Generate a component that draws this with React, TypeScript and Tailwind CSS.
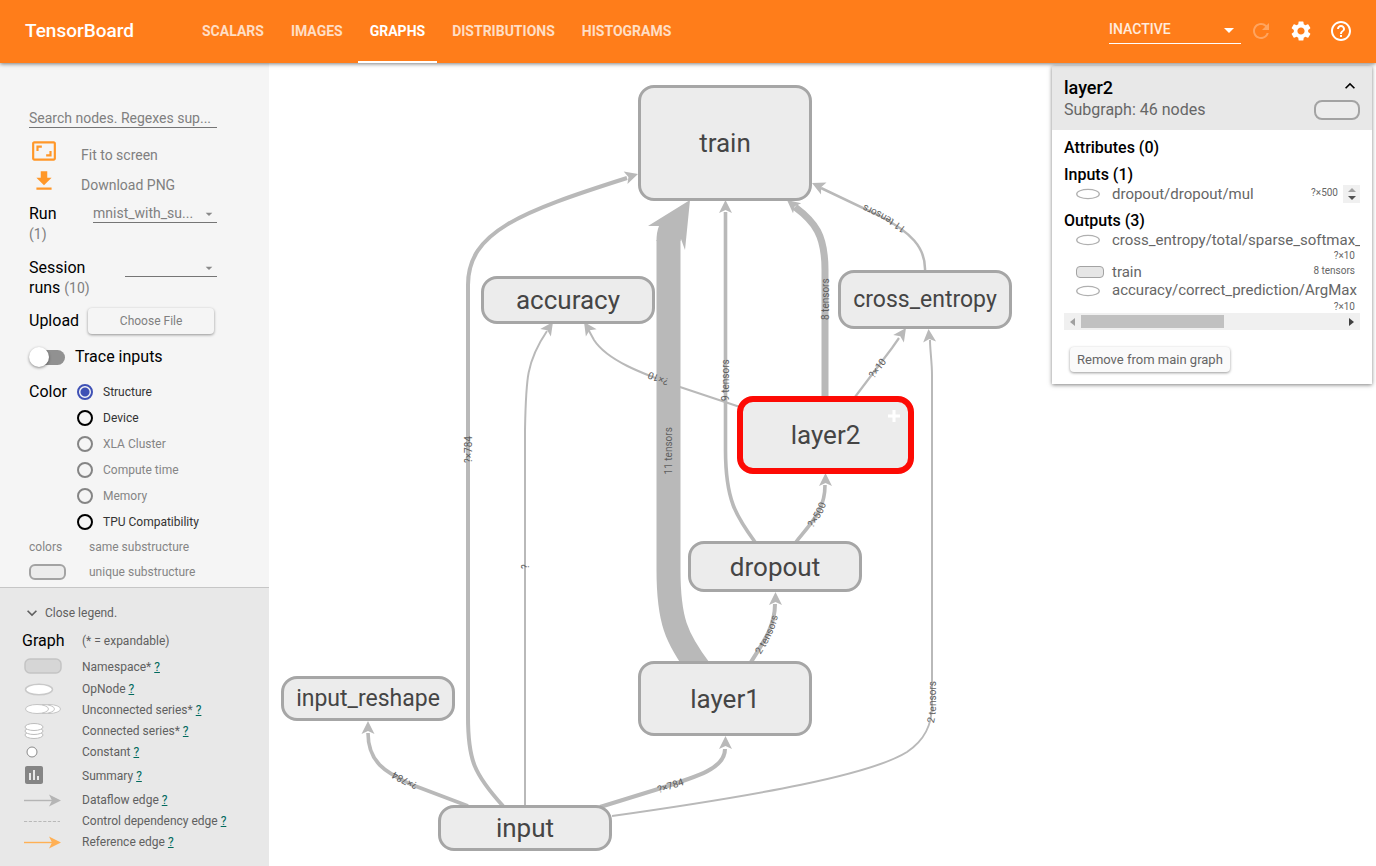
import React from "react";
import {
  MdArrowDropDown,
  MdAspectRatio,
  MdExpandLess,
  MdExpandMore,
  MdFileDownload,
  MdHelpOutline,
  MdInsertChart,
  MdRefresh,
  MdSettings,
} from "react-icons/md";

const tabs = ["SCALARS", "IMAGES", "GRAPHS", "DISTRIBUTIONS", "HISTOGRAMS"];

function Header() {
  return (
    <header className="relative z-20 flex h-[63px] shrink-0 items-center bg-[#ff7d1a] pr-[23px] pl-[25px] text-white shadow-[0_1px_4px_rgba(0,0,0,0.5)]">
      <h1 className="w-[165px] text-[19px] font-medium">TensorBoard</h1>
      <nav className="flex h-full gap-[3px]">
        {tabs.map((t) => (
          <a
            key={t}
            href={"#" + t.toLowerCase()}
            className={
              t === "GRAPHS"
                ? "flex items-center border-b-2 border-white px-3 text-sm font-bold"
                : "flex items-center border-b-2 border-transparent px-3 text-sm font-bold text-white/75"
            }
          >
            {t}
          </a>
        ))}
      </nav>
      <div className="ml-auto flex items-center pb-0.5">
        <div className="relative mr-2 w-[132px] pb-0.5">
          <select
            aria-label="Reload mode"
            className="block h-7 w-full appearance-none border-b border-white bg-transparent text-sm font-medium text-white/85 outline-none"
          >
            <option>INACTIVE</option>
          </select>
          <MdArrowDropDown className="pointer-events-none absolute top-0.5 right-0 size-6" />
        </div>
        <button aria-label="Reload" className="text-white/30">
          <MdRefresh className="size-6" />
        </button>
        <button aria-label="Settings" className="ml-4">
          <MdSettings className="size-6" />
        </button>
        <button aria-label="Help" className="ml-4">
          <MdHelpOutline className="size-6" />
        </button>
      </div>
    </header>
  );
}

const colorModes = [
  { name: "Structure", enabled: true },
  { name: "Device", enabled: true },
  { name: "XLA Cluster", enabled: false },
  { name: "Compute time", enabled: false },
  { name: "Memory", enabled: false },
  { name: "TPU Compatibility", enabled: true },
];

function Controls() {
  return (
    <section className="border-b border-[#c6c6c6] bg-[#f5f5f5] pt-[45px] pr-[52px] pb-0.5 pl-[29px] text-black">
      <input
        aria-label="Search nodes"
        placeholder="Search nodes. Regexes sup..."
        className="block h-5 w-full border-b border-[#757575] bg-transparent text-sm outline-none placeholder:text-[#808080]"
      />
      <button className="mt-2 flex h-[30px] w-full items-center text-sm text-[#808080]">
        <MdAspectRatio className="ml-[2px] size-[26px] text-[#ff9728]" />
        <span className="ml-6 pt-2">Fit to screen</span>
      </button>
      <button className="flex h-[30px] w-full items-center text-sm text-[#808080]">
        <MdFileDownload className="ml-[2px] size-[26px] text-[#ff9728]" />
        <span className="ml-6 pt-2">Download PNG</span>
      </button>

      <div className="mt-2 flex items-start justify-between text-base leading-5">
        <label htmlFor="run">
          Run
          <br />
          <span className="text-sm text-[#808080]">(1)</span>
        </label>
        <div className="relative w-[124px]">
          <select
            id="run"
            className="block h-[19px] w-full appearance-none border-b border-[#757575] bg-transparent text-sm leading-4 text-[#808080] outline-none"
          >
            <option>mnist_with_su...</option>
          </select>
          <MdArrowDropDown className="pointer-events-none absolute top-0.5 right-0 size-4 text-[#8a8a8a]" />
        </div>
      </div>

      <div className="mt-3.5 flex items-start justify-between text-base leading-5">
        <label htmlFor="session">
          Session
          <br />
          runs <span className="text-sm text-[#808080]">(10)</span>
        </label>
        <div className="relative w-[92px]">
          <select
            id="session"
            className="block h-[19px] w-full appearance-none border-b border-[#757575] bg-transparent text-sm outline-none"
          >
            <option></option>
          </select>
          <MdArrowDropDown className="pointer-events-none absolute top-0.5 right-0 size-4 text-[#8a8a8a]" />
        </div>
      </div>

      <div className="mt-[10px] flex items-center text-base">
        <span>Upload</span>
        <button className="ml-[9px] h-[26px] w-[126px] rounded-sm bg-[#f5f5f5] text-xs text-[#808080] shadow-[0_1px_3px_rgba(0,0,0,0.4)]">
          Choose File
        </button>
      </div>

      <label className="mt-[11px] flex h-6 items-center text-base">
        <span className="relative flex h-5 w-9 items-center">
          <input type="checkbox" className="peer absolute inset-0 z-10 m-0 opacity-0" />
          <span className="ml-1 h-[15px] w-8 rounded-full bg-[#919191]" />
          <span className="absolute left-0 size-5 rounded-full bg-white shadow-[0_1px_3px_rgba(0,0,0,0.45)]" />
        </span>
        <span className="ml-2.5">Trace inputs</span>
      </label>

      <fieldset className="mt-[10px] flex items-start">
        <legend className="float-left w-12 text-base leading-[26px]">Color</legend>
        <div className="flex flex-col">
          {colorModes.map((m) => (
            <label
              key={m.name}
              className={
                m.enabled
                  ? "flex h-[26px] items-center gap-2.5 text-xs text-[#333]"
                  : "flex h-[26px] items-center gap-2.5 text-xs text-[#858585]"
              }
            >
              <input
                type="radio"
                name="color"
                disabled={!m.enabled}
                defaultChecked={m.name === "Structure"}
                className="m-0 size-4 appearance-none rounded-full border-2 border-black checked:border-[#3f51b5] checked:bg-[radial-gradient(circle,#3f51b5_4px,transparent_5px)] disabled:border-[#858585]"
              />
              {m.name}
            </label>
          ))}
        </div>
      </fieldset>

      <div className="flex h-6 items-center text-xs text-[#858585]">
        <span className="w-[60px]">colors</span>
        <span>same substructure</span>
      </div>
      <div className="flex h-[26px] items-center text-xs text-[#858585]">
        <span className="mr-[23px] h-4 w-[37px] rounded-md border-2 border-[#a3a3a3] bg-[#ececec]" />
        <span>unique substructure</span>
      </div>
    </section>
  );
}

const legend = [
  {
    name: "Namespace*",
    row: "flex h-[22px] items-center",
    icon: <rect x="1" y="1" width="36" height="14" rx="5" fill="#d6d6d6" stroke="#c4c4c4" strokeWidth="1.5" />,
  },
  {
    name: "OpNode",
    row: "flex h-[21px] items-center",
    icon: <ellipse cx="15" cy="9.5" rx="13.5" ry="5.2" fill="#fff" stroke="#c9c9c9" strokeWidth="1.5" />,
  },
  {
    name: "Unconnected series*",
    row: "flex h-[21px] items-center",
    icon: (
      <g fill="#fff" stroke="#c4c4c4" strokeWidth="1">
        <ellipse cx="25" cy="8" rx="11.5" ry="4.5" />
        <ellipse cx="19" cy="8" rx="11.5" ry="4.5" />
        <ellipse cx="13" cy="8" rx="11.5" ry="4.5" />
      </g>
    ),
  },
  {
    name: "Connected series*",
    row: "flex h-[21px] items-center",
    icon: (
      <g fill="#fff" stroke="#bdbdbd" strokeWidth="1">
        <ellipse cx="10" cy="13" rx="9" ry="3.5" />
        <ellipse cx="10" cy="9" rx="9" ry="3.5" />
        <ellipse cx="10" cy="5" rx="9" ry="3.5" />
      </g>
    ),
  },
  {
    name: "Constant",
    row: "flex h-[21px] items-center",
    icon: <circle cx="8" cy="9" r="5" fill="#fff" stroke="#8a8a8a" />,
  },
  {
    name: "Summary",
    row: "flex h-[27px] items-center",
    icon: <MdInsertChart x="-2" y="-4" size={24} color="#858585" />,
  },
  {
    name: "Dataflow edge",
    row: "flex h-[21px] items-center",
    icon: (
      <g>
        <path d="M0 9.5H28" stroke="#b5b5b5" strokeWidth="1.4" />
        <path d="M37 9.5L25 3.5L28 9.5L25 15.5Z" fill="#b5b5b5" />
      </g>
    ),
  },
  {
    name: "Control dependency edge",
    row: "flex h-[21px] items-center",
    icon: <path d="M0 9.5H36" stroke="#b9b9b9" strokeWidth="1.2" strokeDasharray="3.2 1.6" />,
  },
  {
    name: "Reference edge",
    row: "flex h-[21px] items-center",
    icon: (
      <g>
        <path d="M0 9.5H28" stroke="#ffb055" strokeWidth="1.4" />
        <path d="M37 9.5L25 3.5L28 9.5L25 15.5Z" fill="#ffb055" />
      </g>
    ),
  },
];

function Legend() {
  return (
    <section className="flex-1 bg-[#e8e8e8] pt-[15px] pb-3 pl-6 text-xs text-[#606060]">
      <button className="-ml-0.5 flex h-5 items-center">
        <MdExpandMore className="size-5" />
        <span className="ml-[3px]">Close legend.</span>
      </button>
      <div className="mt-1 -ml-0.5 flex h-7 items-center">
        <h2 className="w-[60px] text-base text-black">Graph</h2>
        <span>(* = expandable)</span>
      </div>
      <ul className="mt-px">
        {legend.map((l) => (
          <li key={l.name} className={l.row}>
            <svg width="38" height="18" className="overflow-visible">
              {l.icon}
            </svg>
            <span className="ml-5">
              {l.name}{" "}
              <a href="#help" className="text-[#00695c] underline">
                ?
              </a>
            </span>
          </li>
        ))}
      </ul>
    </section>
  );
}

type Edge = {
  id: string;
  d: string;
  width: number;
  tip?: [number, number, number];
  label?: string;
  at?: number;
};

const edges: Edge[] = [
  { id: "layer2-accuracy", d: "M740 407L680 387C640 373 607 360 594 340L588 329", width: 2, tip: [584, 322, 236], label: "?×10", at: 76 },
  { id: "layer1-train", d: "M700 670C676 638 668.5 620 668.5 570V240", width: 24, label: "11 tensors", at: 203 },
  { id: "input-train", d: "M503 806C474 774 468 760 468 717V285C468 232 520 212 627 178", width: 4, tip: [638, 174, -17], label: "?×784", at: 353 },
  { id: "input-accuracy", d: "M525 806V430C526 380 526 362 547 331", width: 2, tip: [553, 322, -55], label: "?", at: 237 },
  { id: "dropout-train", d: "M755 542C736 516 725.5 500 725.5 450V212", width: 3.6, tip: [725.5, 200, -90], label: "9 tensors", at: 148 },
  { id: "layer2-train", d: "M825 398V270C825 235 815 222 795 207", width: 7, tip: [787, 200, 219], label: "8 tensors", at: 78 },
  { id: "cross-train", d: "M925 271C926 247 910 232 880 216L821 188", width: 2.5, tip: [812, 183, 205], label: "11 tensors", at: 47 },
  { id: "layer2-cross", d: "M855 397L892 348L899 338", width: 2.2, tip: [906, 328, -55], label: "?×10", at: 26 },
  { id: "input-cross", d: "M612 816C760 795 870 775 907 752C925 740 932 725 932 705V375C932 362 930 350 930 340", width: 2, tip: [928.5, 329, -95], label: "2 tensors", at: 341 },
  { id: "dropout-layer2", d: "M796 542C812 522 825 510 825 485", width: 3.6, tip: [825.5, 473, -90], label: "?×500", at: 21 },
  { id: "layer1-dropout", d: "M751 662C765 640 775 625 775 604", width: 4, tip: [775.5, 592, -90], label: "2 tensors", at: 11 },
  { id: "input-layer1", d: "M600 807L655 790C700 776 725 768 725 749", width: 4, tip: [725.5, 736, -90], label: "?×784", at: 60 },
  { id: "input-reshape", d: "M468 806L410 784C385 772 368 762 368 733", width: 3.6, tip: [368, 721, -90], label: "?×784", at: 55 },
];

const nodes = [
  { name: "train", box: "left-[369px] top-[22px] h-[116px] w-[174px] text-[26px]" },
  { name: "accuracy", box: "left-[212px] top-[213px] h-[48px] w-[174px] text-[26px]" },
  { name: "cross_entropy", box: "left-[569px] top-[207px] h-[59px] w-[174px] text-[23px]" },
  { name: "dropout", box: "left-[419px] top-[478px] h-[51px] w-[174px] text-[26px]" },
  { name: "layer1", box: "left-[369px] top-[598px] h-[75px] w-[174px] text-[26px]" },
  { name: "input_reshape", box: "left-[12px] top-[613px] h-[45px] w-[174px] text-[23px]" },
  { name: "input", box: "left-[169px] top-[742px] h-[46px] w-[174px] text-[26px]" },
];

function Graph() {
  return (
    <div className="absolute inset-0 overflow-hidden">
      <svg width="1107" height="803" viewBox="269 63 1107 803" className="absolute top-0 left-0">
        {edges.map((e) => (
          <g key={e.id}>
            <path id={e.id} d={e.d} fill="none" stroke="#b9b9b9" strokeWidth={e.width} />
            {e.tip && (
              <path
                d="M0 0L-13 6.5L-10 0L-13 -6.5Z"
                fill="#b9b9b9"
                transform={`translate(${e.tip[0]} ${e.tip[1]}) rotate(${e.tip[2]})`}
              />
            )}
          </g>
        ))}
        <path d="M690 200L648 226L659 226Q656.5 232 656.5 241L680.5 241L681 239L685 250Z" fill="#b9b9b9" />
        {edges.map((e) => (
          <text key={e.id} fontSize="10" fill="#5e5e5e" dominantBaseline="central">
            <textPath href={"#" + e.id} startOffset={e.at}>
              {e.label}
            </textPath>
          </text>
        ))}
      </svg>
      {nodes.map((n) => (
        <button
          key={n.name}
          className={
            "absolute flex items-center justify-center rounded-2xl border-3 border-[#a6a6a6] bg-[#ececec] leading-none text-[#454545] " +
            n.box
          }
        >
          {n.name}
        </button>
      ))}
      <button className="absolute top-[333px] left-[468px] flex h-[78px] w-[177px] items-center justify-center rounded-2xl border-6 border-[#fd0a04] bg-[#ececec] text-[26px] leading-none text-[#454545]">
        layer2
        <svg viewBox="0 0 14 14" className="absolute top-[7px] right-[7px] size-3.5">
          <path d="M7 1V13M1 7H13" stroke="#fff" strokeWidth="3" />
        </svg>
      </button>
    </div>
  );
}

function OpIcon() {
  return (
    <svg width="24" height="12" className="mr-3 shrink-0">
      <ellipse cx="12" cy="6" rx="11.3" ry="4.6" fill="#fff" stroke="#b0b0b0" strokeWidth="1.3" />
    </svg>
  );
}

function InfoPanel() {
  return (
    <aside className="absolute top-[3px] right-1 w-80 bg-white text-[#666] shadow-[0_1px_4px_rgba(0,0,0,0.5)]">
      <div className="flex h-16 justify-between bg-[#e8e8e8] pt-2.5 pr-3 pl-3">
        <div>
          <h2 className="text-lg leading-6 font-medium text-black">layer2</h2>
          <p className="text-base leading-5">Subgraph: 46 nodes</p>
        </div>
        <div className="flex flex-col items-end">
          <button aria-label="Collapse" className="text-black">
            <MdExpandLess className="size-5" />
          </button>
          <span className="mt-1 h-5 w-[46px] rounded-lg border-2 border-[#a3a3a3] bg-[#ececec]" />
        </div>
      </div>
      <div className="px-3 pt-2 pb-3">
        <h3 className="h-[27px] text-base leading-5 font-medium text-black">Attributes (0)</h3>
        <h3 className="text-base leading-5 font-medium text-black">Inputs (1)</h3>
        <div className="flex h-[18px] items-center pl-3 text-[15px]">
          <OpIcon />
          <span>dropout/dropout/mul</span>
          <span className="mr-[5px] ml-auto pb-1 text-[10px]">?×500</span>
          <span className="flex h-[18px] w-[17px] flex-col items-center justify-between bg-[#f0f0f0] py-[3px]">
            <svg width="8" height="4">
              <path d="M0 4L4 0L8 4Z" fill="#a0a0a0" />
            </svg>
            <svg width="8" height="4">
              <path d="M0 0L4 4L8 0Z" fill="#505050" />
            </svg>
          </span>
        </div>
        <h3 className="mt-2 text-base leading-5 font-medium text-black">Outputs (3)</h3>
        <div className="flex h-[18px] items-center overflow-hidden pl-3 text-[15px] whitespace-nowrap">
          <OpIcon />
          <span>cross_entropy/total/sparse_softmax_c</span>
        </div>
        <p className="h-[14px] pr-[5px] text-right text-[10px] leading-[14px]">?×10</p>
        <div className="flex h-[18px] items-center pl-3 text-[15px]">
          <span className="mr-2 h-3 w-7 rounded-sm border border-[#a3a3a3] bg-[#e6e6e6]" />
          <span>train</span>
          <span className="mr-[5px] ml-auto pb-1 text-[10px]">8 tensors</span>
        </div>
        <div className="flex h-[19px] items-center pl-3 text-[15px]">
          <OpIcon />
          <span>accuracy/correct_prediction/ArgMax</span>
        </div>
        <p className="h-[13px] pr-[5px] text-right text-[10px] leading-[14px]">?×10</p>
        <div className="flex h-[17px] items-center bg-[#f0f0f0] px-1.5">
          <svg width="5" height="8">
            <path d="M5 0L0 4L5 8Z" fill="#a0a0a0" />
          </svg>
          <span className="ml-1.5 h-[13px] w-[143px] bg-[#c1c1c1]" />
          <svg width="5" height="8" className="ml-auto">
            <path d="M0 0L5 4L0 8Z" fill="#404040" />
          </svg>
        </div>
        <button className="mt-[17px] ml-1.5 block h-[25px] rounded-sm bg-[#fafafa] px-[7px] text-[13px] shadow-[0_1px_3px_rgba(0,0,0,0.4)]">
          Remove from main graph
        </button>
      </div>
    </aside>
  );
}

export default function App() {
  return (
    <div className="flex min-h-screen flex-col bg-white font-['Roboto',sans-serif]">
      <Header />
      <div className="flex flex-1">
        <div className="flex w-[269px] shrink-0 flex-col">
          <Controls />
          <Legend />
        </div>
        <main className="relative flex-1">
          <Graph />
          <InfoPanel />
        </main>
      </div>
    </div>
  );
}
